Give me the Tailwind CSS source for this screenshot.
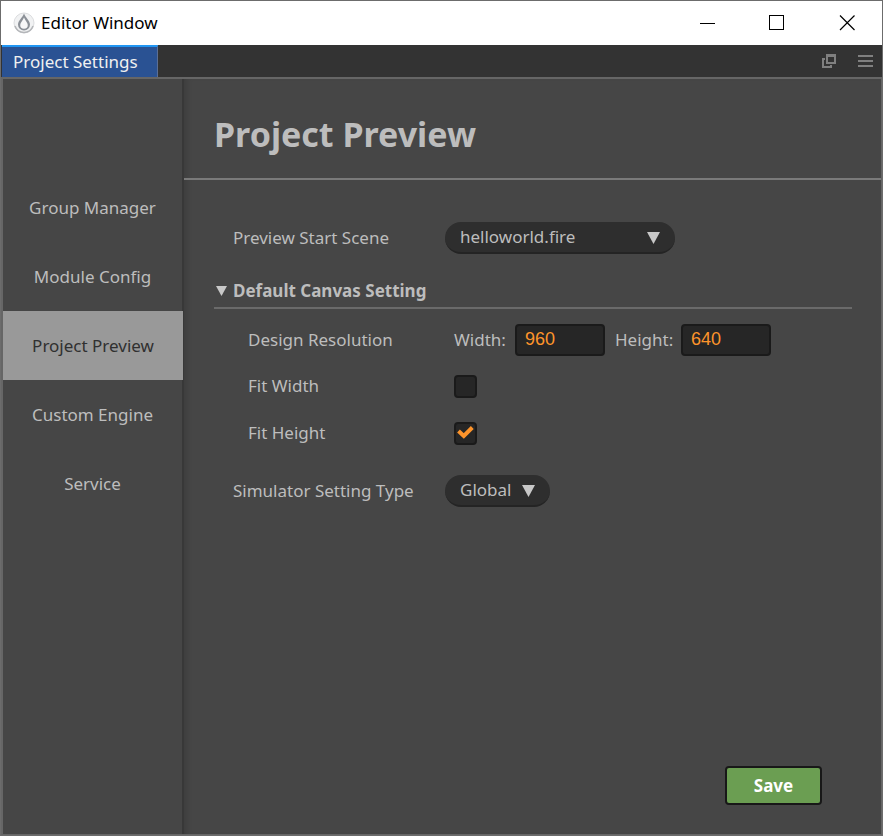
<!DOCTYPE html>
<html lang="en">
<head>
<meta charset="utf-8">
<meta name="viewport" content="width=device-width, initial-scale=1">
<title>Editor Window</title>
<script src="https://cdn.jsdelivr.net/npm/@tailwindcss/browser@4"></script>
</head>
<body class="flex min-h-screen flex-col border border-[#6c6c6c] bg-[#464646] font-['Noto_Sans','Open_Sans',sans-serif] text-[17px] leading-6 text-[#bdbdbd]">
  <header class="flex h-11 items-center bg-white text-black">
    <svg class="ml-3 size-[22px]" viewBox="0 0 22 22" fill="none" aria-hidden="true">
      <circle cx="11" cy="11" r="10" fill="#f1f2f3" stroke="#dcdddf"/>
      <path d="M2 14A9.500 9.500 0 0 0 20 14" stroke="#b4b6b9" stroke-width="1.500"/>
      <path d="M11 1.500C9.500 5.500 5 9 5 12.500a6 6 0 0 0 12 0C17 9 12.500 5.500 11 1.500Z" fill="#8b9097"/>
      <path d="M11 5.500C10 8.500 7.200 10.500 7.200 13a3.800 3.800 0 0 0 7.600 0C14.800 10.500 12 8.500 11 5.500Z" fill="#f7f7f8"/>
    </svg>
    <h1 class="ml-[6px] flex-1">Editor Window</h1>
    <div class="flex h-full">
      <button type="button" aria-label="Minimize" class="grid w-[69px] place-items-center"><svg class="size-4" viewBox="0 0 16 16" stroke="#000" shape-rendering="crispEdges"><path d="M0 8.500H15"/></svg></button>
      <button type="button" aria-label="Maximize" class="grid w-[69px] place-items-center"><svg class="size-4" viewBox="0 0 16 16" fill="none" stroke="#000" shape-rendering="crispEdges"><path d="M.5 .5h14v14h-14z"/></svg></button>
      <button type="button" aria-label="Close" class="grid w-[71px] place-items-center"><svg class="size-4" viewBox="0 0 16 16" fill="none" stroke="#000" stroke-width="1.200"><path d="M1 .5l14.500 14.500M15.500 .5l-14.500 14.500"/></svg></button>
    </div>
  </header>

  <div class="flex h-[34px] items-stretch border-b-2 border-[#666] bg-[#333] pl-px">
    <button type="button" class="w-[156px] border-t-2 border-r border-t-[#2196f3] border-r-[#5b6f96] bg-[#2a5293] pl-[11px] text-left text-[#f0f0f0]">Project Settings</button>
    <div class="ml-auto flex items-center gap-[22px] pr-[9px]">
      <button type="button" aria-label="Pop out"><svg class="size-[14px]" viewBox="0 0 14 14" fill="none" stroke="#808080" stroke-width="2"><path d="M5 1h8v8H5z"/><path d="M4 1.500h10" stroke-width="3"/><path d="M3 5H1v8h8v-2"/></svg></button>
      <button type="button" aria-label="Menu"><svg class="h-[14px] w-[15px]" viewBox="0 0 15 14" stroke="#808080" stroke-width="2"><path d="M0 2h15M0 7h15M0 12h15"/></svg></button>
    </div>
  </div>

  <div class="flex flex-1 border-r border-b border-l-2 border-[#666]">
    <nav class="w-[181px] shrink-0 border-r-2 border-[#383838] pt-[94px] text-center">
      <a href="#" class="block py-[22px] leading-[25px]">Group Manager</a>
      <a href="#" class="block py-[22px] leading-[25px]">Module Config</a>
      <a href="#" aria-current="page" class="-mr-px block bg-[#999] py-[22px] leading-[25px] text-[#303030]">Project Preview</a>
      <a href="#" class="block py-[22px] leading-[25px]">Custom Engine</a>
      <a href="#" class="block py-[22px] leading-[25px]">Service</a>
    </nav>

    <main class="flex flex-1 flex-col shadow-[inset_6px_0_6px_-4px_rgba(0,0,0,0.15)]">
      <h2 class="border-b-2 border-[#7a7a7a] px-[30px] pt-[31px] pb-5 text-[34px] leading-12 font-bold">Project Preview</h2>
      <form class="flex flex-1 flex-col pt-[42px] pr-[29px] pb-[29px] pl-[30px]">
        <div class="flex h-8 items-center pl-[19px]">
          <label for="scene" class="w-[212px]">Preview Start Scene</label>
          <div class="relative">
            <select id="scene" class="h-8 w-[230px] appearance-none rounded-full border-b-2 border-[#242424] bg-[#2e2e2e] pl-[15px]"><option>helloworld.fire</option></select>
            <svg class="pointer-events-none absolute top-[10px] right-[15px] h-3 w-[13px]" viewBox="0 0 13 12" fill="#c8c8c8" aria-hidden="true"><path d="M0 0h13L6.500 12z"/></svg>
          </div>
        </div>

        <fieldset class="mt-[22px]">
          <legend class="flex h-[33px] w-full items-center gap-[6px] border-b-2 border-[#6a6a6a] pb-[2px] pl-[2px] font-bold">
            <svg class="h-[10px] w-[11px]" viewBox="0 0 11 10" fill="#c8c8c8" aria-hidden="true"><path d="M0 0h11L5.500 10z"/></svg>
            Default Canvas Setting
          </legend>
          <div class="mt-[15px] flex h-8 items-center pl-[34px]">
            <span class="w-[206px]">Design Resolution</span>
            <label for="width" class="w-[61px]">Width:</label>
            <input id="width" value="960" class="h-8 w-[90px] rounded border-2 border-[#1a1a1a] bg-[#262626] px-[8px] pb-[2px] font-['Liberation_Sans',sans-serif] text-[18px] text-[#fd942b]">
            <label for="height" class="ml-[10px] w-[66px]">Height:</label>
            <input id="height" value="640" class="h-8 w-[90px] rounded border-2 border-[#1a1a1a] bg-[#262626] px-[8px] pb-[2px] font-['Liberation_Sans',sans-serif] text-[18px] text-[#fd942b]">
          </div>
          <div class="mt-[18px] flex items-center pl-[34px]">
            <label for="fit-width" class="w-[206px]">Fit Width</label>
            <input id="fit-width" type="checkbox" class="size-[23px] appearance-none rounded border-2 border-[#1a1a1a] bg-[#262626]">
          </div>
          <div class="mt-[23px] flex items-center pl-[34px]">
            <label for="fit-height" class="w-[206px]">Fit Height</label>
            <div class="relative size-[23px]">
              <input id="fit-height" type="checkbox" checked class="peer block size-[23px] appearance-none rounded border-2 border-[#1a1a1a] bg-[#262626]">
              <svg class="pointer-events-none absolute inset-0 hidden peer-checked:block" viewBox="0 0 23 23" fill="none" stroke="#fd942b" stroke-width="4" aria-hidden="true"><path d="M4.500 9l5.300 5L18.300 5.500"/></svg>
            </div>
          </div>
        </fieldset>

        <div class="mt-[30px] flex h-8 items-center pl-[19px]">
          <label for="simulator" class="w-[212px]">Simulator Setting Type</label>
          <div class="relative">
            <select id="simulator" class="h-8 w-[105px] appearance-none rounded-full border-b-2 border-[#242424] bg-[#2e2e2e] pl-[15px]"><option>Global</option></select>
            <svg class="pointer-events-none absolute top-[10px] right-[15px] h-3 w-[13px]" viewBox="0 0 13 12" fill="#c8c8c8" aria-hidden="true"><path d="M0 0h13L6.500 12z"/></svg>
          </div>
        </div>

        <button type="submit" class="mt-auto mr-[30px] h-[39px] w-[97px] self-end rounded border-2 border-[#181818] bg-[#6b9e52] font-bold text-white">Save</button>
      </form>
    </main>
  </div>
</body>
</html>
